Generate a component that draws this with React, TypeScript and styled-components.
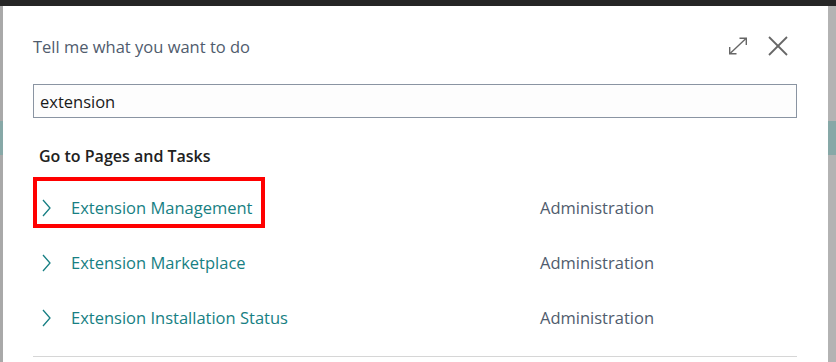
import styled, { createGlobalStyle } from "styled-components";

const GlobalStyle = createGlobalStyle`
  html, body {
    margin: 0;
    padding: 0;
    background: #262626;
  }
  body {
    font-family: "Segoe UI", "Open Sans", "Liberation Sans", sans-serif;
  }
`;

const Screen = styled.div`
  width: 836px;
  height: 362px;
  overflow: hidden;
  display: flex;
  flex-direction: column;
`;

const TopBar = styled.div`
  height: 6px;
  flex: none;
  background: #262626;
`;

const Body = styled.div`
  flex: 1;
  display: flex;
  min-height: 0;
`;

const SideStrip = styled.div<{ $width: number; $tone: string }>`
  width: ${(p) => p.$width}px;
  flex: none;
  background: ${(p) => p.$tone};
  display: flex;
  flex-direction: column;
`;

const StripBand = styled.div`
  margin-top: 115px;
  height: 34px;
  background: #87a8a7;
`;

const Dialog = styled.div`
  flex: 1;
  background: #ffffff;
  padding: 24px 31px 0 30px;
  display: flex;
  flex-direction: column;
`;

const Header = styled.div`
  height: 32px;
  display: flex;
  align-items: center;
  justify-content: space-between;
`;

const Title = styled.h1`
  margin: 0;
  font-size: 16.5px;
  font-weight: 400;
  color: #505c6d;
`;

const HeaderTools = styled.div`
  display: flex;
  align-items: center;
  gap: 20px;
  margin-right: 9px;
`;

const ToolButton = styled.button`
  border: none;
  background: none;
  padding: 0;
  display: flex;
  cursor: pointer;
  color: #666666;
`;

const SearchInput = styled.input`
  margin-top: 22px;
  height: 34px;
  box-sizing: border-box;
  border: 1px solid #8a94a2;
  background: #fdfdfd;
  padding: 0 6px;
  font-family: inherit;
  font-size: 16.5px;
  color: #1a1a1a;
  outline: none;
`;

const SectionTitle = styled.h2`
  margin: 26px 0 12px 6px;
  height: 24px;
  line-height: 24px;
  font-size: 16px;
  font-weight: 600;
  color: #212121;
`;

const ResultList = styled.div`
  display: flex;
  flex-direction: column;
`;

const ResultRow = styled.div`
  height: 55px;
  display: grid;
  grid-template-columns: 507px 1fr;
  align-items: center;
`;

const ResultLink = styled.a<{ $marked?: boolean }>`
  position: relative;
  display: flex;
  align-items: center;
  gap: 20px;
  padding-left: 9px;
  font-size: 16.5px;
  color: #177f83;
  text-decoration: none;
  cursor: pointer;

  &::after {
    content: "";
    display: ${(p) => (p.$marked ? "block" : "none")};
    position: absolute;
    left: 0;
    top: -19px;
    width: 232px;
    height: 51px;
    box-sizing: border-box;
    border: 4px solid #ff0000;
    pointer-events: none;
  }
`;

const Category = styled.span`
  font-size: 16.5px;
  color: #505c6d;
`;

const Divider = styled.div`
  margin-top: 11px;
  height: 1px;
  background: #d6d6d6;
`;

function ExpandIcon() {
  return (
    <svg width="20" height="18" viewBox="0 0 20 18" fill="none" stroke="currentColor" strokeWidth="1.4">
      <path d="M2 16.5 L18 1.5" />
      <path d="M11.5 1.3 H18.3 V8" />
      <path d="M1.7 10 V16.7 H8.5" />
    </svg>
  );
}

function CloseIcon() {
  return (
    <svg width="20" height="20" viewBox="0 0 20 20" fill="none" stroke="currentColor" strokeWidth="1.8">
      <path d="M1 1 L19 19" />
      <path d="M19 1 L1 19" />
    </svg>
  );
}

function Chevron() {
  return (
    <svg width="9" height="18" viewBox="0 0 9 18" fill="none" stroke="currentColor" strokeWidth="1.3">
      <path d="M1 1 L8 9 L1 17" />
    </svg>
  );
}

const results = [
  { name: "Extension Management", category: "Administration", marked: true },
  { name: "Extension Marketplace", category: "Administration" },
  { name: "Extension Installation Status", category: "Administration" },
];

export default function App() {
  return (
    <Screen>
      <GlobalStyle />
      <TopBar />
      <Body>
        <SideStrip $width={3} $tone="#a9a9a9">
          <StripBand />
        </SideStrip>
        <Dialog>
          <Header>
            <Title>Tell me what you want to do</Title>
            <HeaderTools>
              <ToolButton aria-label="Expand">
                <ExpandIcon />
              </ToolButton>
              <ToolButton aria-label="Close">
                <CloseIcon />
              </ToolButton>
            </HeaderTools>
          </Header>
          <SearchInput defaultValue="extension" />
          <SectionTitle>Go to Pages and Tasks</SectionTitle>
          <ResultList>
            {results.map((r) => (
              <ResultRow key={r.name}>
                <ResultLink $marked={r.marked}>
                  <Chevron />
                  <span>{r.name}</span>
                </ResultLink>
                <Category>{r.category}</Category>
              </ResultRow>
            ))}
          </ResultList>
          <Divider />
        </Dialog>
        <SideStrip $width={8} $tone="#b3b3b3">
          <StripBand />
        </SideStrip>
      </Body>
    </Screen>
  );
}
